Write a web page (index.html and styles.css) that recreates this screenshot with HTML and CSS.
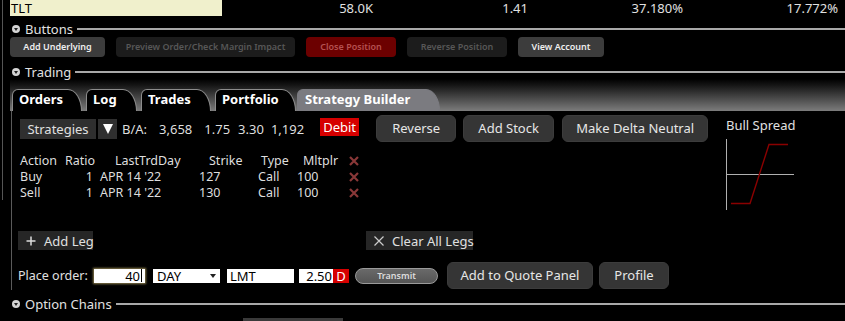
FILE: index.html
```html
<!DOCTYPE html>
<html>
<head>
<meta charset="utf-8">
<link rel="stylesheet" href="styles.css">
</head>
<body>
<div class="frame">
  <div class="quote">
    <div class="sym">TLT</div>
    <div class="val">58.0K</div>
    <div class="val">1.41</div>
    <div class="val">37.180%</div>
    <div class="val">17.772%</div>
  </div>

  <div class="sec sec-buttons">
    <span class="sec-icon"></span><span class="sec-title">Buttons</span><span class="sec-line"></span>
  </div>
  <div class="btnrow">
    <div class="sb sb-on w-underlying">Add Underlying</div>
    <div class="sb sb-off w-preview">Preview Order/Check Margin Impact</div>
    <div class="sb sb-red w-close">Close Position</div>
    <div class="sb sb-off w-revpos">Reverse Position</div>
    <div class="sb sb-on w-account">View Account</div>
  </div>

  <div class="sec sec-trading">
    <span class="sec-icon"></span><span class="sec-title">Trading</span><span class="sec-line"></span>
  </div>

  <div class="tabbar">
    <div class="tab t-orders">Orders</div>
    <div class="tab t-log">Log</div>
    <div class="tab t-trades">Trades</div>
    <div class="tab t-portfolio">Portfolio</div>
    <div class="tab tab-active t-strategy">Strategy Builder</div>
  </div>

  <div class="panel">
    <div class="main">
      <div class="row1">
        <div class="strat">Strategies</div>
        <div class="strat-arrow"><span class="tri-down"></span></div>
        <span class="ba">B/A:</span>
        <span class="ba-v1">3,658</span>
        <span class="ba-v2">1.75</span>
        <span class="ba-v3">3.30</span>
        <span class="ba-v4">1,192</span>
        <span class="debit">Debit</span>
        <div class="mb w-reverse">Reverse</div>
        <div class="mb w-addstock">Add Stock</div>
        <div class="mb w-delta">Make Delta Neutral</div>
      </div>

      <div class="legs">
        <div class="lh c-action">Action</div>
        <div class="lh c-ratio">Ratio</div>
        <div class="lh c-day">LastTrdDay</div>
        <div class="lh c-strike">Strike</div>
        <div class="lh c-type">Type</div>
        <div class="lh c-mult">Mltplr</div>
        <div class="lx"><svg width="10" height="10" viewBox="0 0 10 10"><path d="M1 1L9 9M9 1L1 9" stroke="#8a3838" stroke-width="2.2" fill="none"/></svg></div>

        <div class="lc c-action">Buy</div>
        <div class="lc c-ratio">1</div>
        <div class="lc c-day">APR 14 '22</div>
        <div class="lc c-strike">127</div>
        <div class="lc c-type">Call</div>
        <div class="lc c-mult">100</div>
        <div class="lx"><svg width="10" height="10" viewBox="0 0 10 10"><path d="M1 1L9 9M9 1L1 9" stroke="#8a3838" stroke-width="2.2" fill="none"/></svg></div>

        <div class="lc c-action">Sell</div>
        <div class="lc c-ratio">1</div>
        <div class="lc c-day">APR 14 '22</div>
        <div class="lc c-strike">130</div>
        <div class="lc c-type">Call</div>
        <div class="lc c-mult">100</div>
        <div class="lx"><svg width="10" height="10" viewBox="0 0 10 10"><path d="M1 1L9 9M9 1L1 9" stroke="#8a3838" stroke-width="2.2" fill="none"/></svg></div>
      </div>

      <div class="legrow">
        <div class="flat w-addleg">
          <svg class="ico" width="10" height="10" viewBox="0 0 10 10"><path d="M5 0.5V9.5M0.5 5H9.5" stroke="#ddd" stroke-width="1.5" fill="none"/></svg>
          <span>Add Leg</span>
        </div>
        <div class="flat w-clear">
          <svg class="ico" width="12" height="10" viewBox="0 0 12 10"><path d="M1.5 0.5L10.5 9.5M10.5 0.5L1.5 9.5" stroke="#ccc" stroke-width="1.2" fill="none"/></svg>
          <span>Clear All Legs</span>
        </div>
      </div>

      <div class="orderrow">
        <span class="po-label">Place order:</span>
        <div class="inp inp-qty">40<span class="caret"></span></div>
        <div class="inp inp-day">DAY<span class="sel-tri"></span></div>
        <div class="inp inp-lmt">LMT</div>
        <div class="inp inp-price">2.50</div><div class="dflag">D</div>
        <div class="transmit">Transmit</div>
        <div class="mb w-quote">Add to Quote Panel</div>
        <div class="mb w-profile">Profile</div>
      </div>
    </div>

    <div class="side">
      <div class="side-title">Bull Spread</div>
      <svg class="chart" width="72" height="72" viewBox="0 0 72 72">
        <path d="M2.5 0V71" stroke="#b0b0b0" stroke-width="1" fill="none"/>
        <path d="M2 35.5H70" stroke="#b0b0b0" stroke-width="1" fill="none"/>
        <path d="M7 64.5H26L45 5.5H64" stroke="#8a0000" stroke-width="1.4" fill="none"/>
      </svg>
    </div>
  </div>

  <div class="sec sec-chains">
    <span class="sec-icon"></span><span class="sec-title">Option Chains</span><span class="sec-line"></span>
  </div>
  <div class="stub"></div>
</div>
</body>
</html>
```

FILE: styles.css
```css
html, body {
  margin: 0;
  padding: 0;
  background: #000;
}
body {
  width: 845px;
  height: 321px;
  overflow: hidden;
  font-family: "Noto Sans", "DejaVu Sans", sans-serif;
  color: #dedede;
}
.frame {
  position: relative;
  width: 845px;
  height: 321px;
}
.frame::before {
  content: "";
  position: absolute;
  left: 2px;
  top: 0;
  width: 1px;
  height: 200px;
  background: #555;
}

/* quote row */
.quote {
  display: flex;
  height: 16px;
  font-size: 13px;
  line-height: 16px;
}
.sym {
  width: 212px;
  margin-left: 10px;
  padding-left: 1px;
  box-sizing: border-box;
  background: #f0f0cc;
  color: #000;
}
.val {
  width: 155px;
  box-sizing: border-box;
  padding-right: 4px;
  text-align: right;
  color: #e0e0e0;
}

/* section headers */
.sec {
  display: flex;
  align-items: center;
  height: 14px;
  margin-left: 12px;
}
.sec-buttons { margin-top: 6px; }
.sec-trading { margin-top: 8px; }
.sec-chains { margin-top: 7px; }
.sec-icon {
  width: 8px;
  height: 8px;
  border-radius: 50%;
  background: #d4d4d4;
  display: flex;
  align-items: center;
  justify-content: center;
  flex: none;
}
.sec-icon::after {
  content: "";
  width: 0;
  height: 0;
  border-left: 2.5px solid transparent;
  border-right: 2.5px solid transparent;
  border-top: 3px solid #222;
  margin-top: 1px;
}
.sec-title {
  margin-left: 5px;
  font-size: 13px;
  line-height: 14px;
  color: #e2e2e2;
}
.sec-line {
  flex: 1;
  height: 2px;
  margin-left: 4px;
  background: #a8a8a8;
}

/* small buttons row */
.btnrow {
  display: flex;
  gap: 11px;
  margin: 1px 0 0 10px;
  height: 20px;
}
.sb {
  height: 20px;
  border-radius: 4px;
  font-size: 9px;
  font-weight: 600;
  line-height: 20px;
  text-align: center;
  box-sizing: border-box;
}
.sb-on { background: #3c3c3c; color: #eeeeee; }
.sb-off { background: #1c1c1c; color: #575757; }
.sb-red { background: #6c0000; color: #b45050; }
.w-underlying { width: 95px; }
.w-preview { width: 179px; }
.w-close { width: 90px; }
.w-revpos { width: 100px; }
.w-account { width: 86px; }

/* tabs */
.tabbar {
  display: flex;
  align-items: flex-end;
  gap: 4px;
  height: 32px;
  margin-left: 10px;
  padding-left: 2px;
  box-sizing: border-box;
  background: linear-gradient(#000 0%, #161616 20%, #7c7c7c 100%);
}
.tab {
  height: 22px;
  box-sizing: border-box;
  padding-left: 6px;
  font-size: 13px;
  font-weight: 700;
  line-height: 18px;
  color: #fff;
  background: #000;
  border: 1px solid #8c8c8c;
  border-bottom: none;
  border-radius: 6px 14px 0 0 / 6px 22px 0 0;
}
.tab-active {
  background: #7b7b80;
  border-color: #7b7b80;
  padding-left: 7px;
}
.t-orders { width: 70px; }
.t-log { width: 51px; }
.t-trades { width: 70px; }
.t-portfolio { width: 81px; }
.t-strategy { width: 143px; margin-left: -3px; }

/* panel */
.panel {
  display: flex;
  margin-left: 11px;
  height: 179px;
  border-left: 1px solid #5a5a5a;
  padding: 4px 0 0 8px;
  box-sizing: border-box;
}
.main {
  width: 706px;
  display: flex;
  flex-direction: column;
}
.row1 {
  display: flex;
  align-items: center;
  height: 27px;
  font-size: 13px;
  white-space: nowrap;
}
.strat {
  width: 76px;
  height: 20px;
  background: #2f2f2f;
  line-height: 20px;
  text-align: center;
  color: #e0e0e0;
}
.strat-arrow {
  width: 19px;
  height: 20px;
  margin-left: 2px;
  background: #2f2f2f;
  display: flex;
  align-items: center;
  justify-content: center;
}
.tri-down {
  width: 0;
  height: 0;
  border-left: 5px solid transparent;
  border-right: 5px solid transparent;
  border-top: 10px solid #fff;
}
.ba { margin-left: 5px; }
.ba-v1 { margin-left: 12px; }
.ba-v2 { margin-left: 12px; }
.ba-v3 { margin-left: 8px; }
.ba-v4 { margin-left: 7px; }
.debit {
  margin-left: 16px;
  width: 39px;
  height: 18px;
  line-height: 18px;
  text-align: center;
  background: #d60000;
  color: #fff;
  margin-top: -3px;
}
.mb {
  height: 27px;
  border-radius: 6px;
  background: #353535;
  color: #e6e6e6;
  font-size: 13px;
  line-height: 25px;
  text-align: center;
  box-sizing: border-box;
  border: 1px solid #3c3c3c;
  white-space: nowrap;
}
.w-reverse { width: 80px; margin-left: 17px; }
.w-addstock { width: 91px; margin-left: 7px; }
.w-delta { width: 146px; margin-left: 8px; }

/* legs table */
.legs {
  display: grid;
  grid-template-columns: 42px 35px 99px 59px 42px 50px 20px;
  grid-auto-rows: 16px;
  margin-top: 11px;
  font-size: 12.5px;
  line-height: 16px;
}
.lh, .lc { white-space: nowrap; }
.lh.c-ratio { padding-left: 3px; }
.lc.c-ratio { text-align: right; padding-right: 4px; }
.lh.c-day { padding-left: 18px; }
.lc.c-day { padding-left: 3px; }
.lh.c-strike { padding-left: 13px; }
.lc.c-strike { padding-left: 3px; }
.lh.c-type { padding-left: 6px; }
.lc.c-type { padding-left: 3px; }
.lh.c-mult { padding-left: 6px; }
.lc.c-mult { padding-left: 0; }
.lx {
  display: flex;
  align-items: center;
  padding-left: 2px;
}

.legrow {
  display: flex;
  margin: 30px 0 0 -2px;
  height: 19px;
}
.flat {
  display: flex;
  align-items: center;
  height: 19px;
  background: #262626;
  font-size: 13px;
  color: #e0e0e0;
  box-sizing: border-box;
  white-space: nowrap;
}
.flat .ico { flex: none; }
.w-addleg { width: 75px; padding-left: 8px; gap: 8px; }
.w-clear { width: 107px; margin-left: 273px; padding-left: 7px; gap: 7px; }

.orderrow {
  display: flex;
  align-items: center;
  height: 27px;
  margin: 12px 0 0 -2px;
  font-size: 12.5px;
  white-space: nowrap;
}
.po-label { width: 76px; color: #e0e0e0; }
.inp {
  height: 14px;
  box-sizing: border-box;
  background: #fff;
  color: #000;
  font-size: 13px;
  line-height: 14px;
}
.inp-qty {
  width: 51px;
  text-align: right;
  padding-right: 3px;
  box-shadow: 0 0 2px 1px #8d7f4e;
}
.caret {
  display: inline-block;
  width: 1px;
  height: 13px;
  background: #000;
  vertical-align: top;
  margin-left: 1px;
}
.inp-day {
  width: 67px;
  margin-left: 8px;
  padding-left: 4px;
  display: flex;
  align-items: center;
  justify-content: space-between;
  padding-right: 4px;
}
.sel-tri {
  width: 0;
  height: 0;
  border-left: 3.5px solid transparent;
  border-right: 3.5px solid transparent;
  border-top: 4px solid #222;
}
.inp-lmt { width: 67px; margin-left: 7px; padding-left: 3px; }
.inp-price { width: 34px; margin-left: 5px; text-align: right; padding-right: 1px; }
.dflag {
  width: 16px;
  height: 14px;
  background: #d60000;
  color: #fff;
  font-size: 13px;
  line-height: 14px;
  text-align: center;
}
.transmit {
  width: 83px;
  height: 16px;
  margin-left: 6px;
  border-radius: 8px;
  box-sizing: border-box;
  border: 1px solid #9a9a9a;
  background: linear-gradient(#6a6a6a, #555);
  color: #dcdcdc;
  font-size: 9px;
  font-weight: 600;
  line-height: 14px;
  text-align: center;
}
.w-quote { width: 146px; margin-left: 9px; }
.w-profile { width: 70px; margin-left: 6px; }

/* side chart */
.side {
  display: flex;
  flex-direction: column;
}
.side-title {
  font-size: 13px;
  line-height: 16px;
  margin-top: 2px;
  color: #e0e0e0;
}
.chart {
  display: block;
  margin: 6px 0 0 -2px;
}

.stub {
  width: 100px;
  height: 3px;
  margin: 7px 0 0 243px;
  background: #3a3a3a;
}
```
